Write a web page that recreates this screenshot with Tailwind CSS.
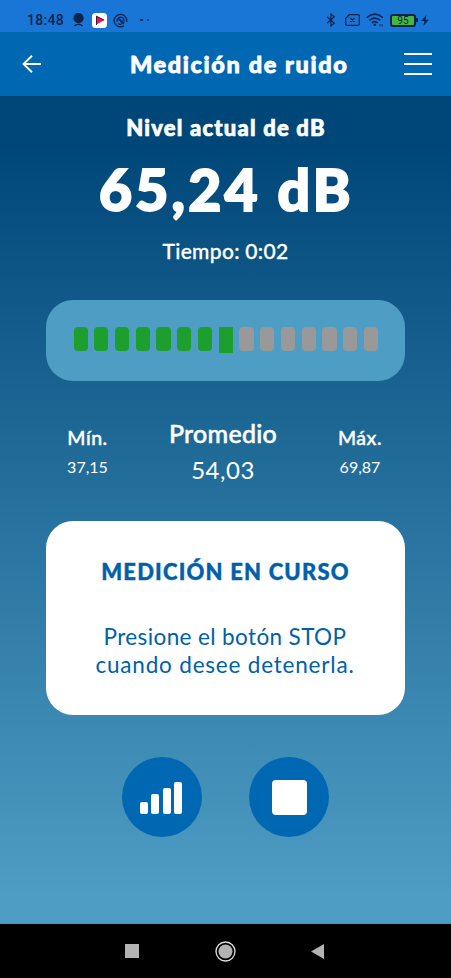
<!DOCTYPE html>
<html lang="es">
<head>
<meta charset="utf-8">
<meta name="viewport" content="width=device-width, initial-scale=1">
<title>Medición de ruido</title>
<script src="https://cdn.jsdelivr.net/npm/@tailwindcss/browser@4"></script>
</head>
<body class="bg-black">
<div class="w-[451px] h-[978px] flex flex-col overflow-hidden font-['Lato',sans-serif] text-white whitespace-nowrap">

  <!-- Status bar -->
  <div class="h-8 shrink-0 bg-[#1976d7] flex items-center justify-between pl-[27px] pr-[22px] pt-2 text-[#0a2450]">
    <div class="flex items-center">
      <span class="w-[38px] font-['Roboto',sans-serif] text-[14px] leading-4 font-medium tracking-[0.3px]">18:48</span>
      <svg class="ml-2 w-[11px] h-[14px]" viewBox="0 0 11 14"><circle cx="5.5" cy="5.2" r="5.1" fill="currentColor"/><path d="M1.500 12.800Q5.500 9.800 9.500 12.800" fill="none" stroke="currentColor" stroke-width="1.500"/></svg>
      <svg class="ml-2 w-[15px] h-[15px]" viewBox="0 0 15 15"><rect width="15" height="15" rx="3.500" fill="#fff"/><path d="M4 3 12.500 7 4.500 11.500z" fill="#e8194f"/><path d="M4.500 3V12M4 3 12 7" stroke="#4a1636" stroke-width="1" fill="none"/></svg>
      <svg class="ml-[6px] w-[15px] h-[15px]" viewBox="0 0 15 15" fill="none" stroke="currentColor"><path d="M11 12.800A6.300 6.300 0 1 1 13.600 9" stroke-width="1.300"/><path d="M4.300 8.800A3.400 3.400 0 0 1 10.900 6.500V8.500M4.800 10.500Q7 12 9 10.800" stroke-width="1.300"/><path d="M5.800 6 11 10.600" stroke-width="2.200"/></svg>
      <span class="ml-[12px] w-[2.500px] h-[2.500px] rounded-full bg-[#0a2450]"></span>
      <span class="ml-[4px] w-[2.500px] h-[2.500px] rounded-full bg-[#0a2450]"></span>
    </div>
    <div class="flex items-center">
      <svg class="w-[10px] h-[14px]" viewBox="0 0 10 14" fill="none" stroke="currentColor" stroke-width="1.200"><path d="M1 3.800 8.300 10.200 4.900 13V1L8.300 3.800 1 10.200"/></svg>
      <svg class="ml-[9px] w-[15px] h-[12px]" viewBox="0 0 15 12" fill="none" stroke="currentColor" stroke-width="1.200"><path d="M4.300.7H13.200Q14.300.7 14.300 1.800V10.200Q14.300 11.300 13.200 11.300H1.800Q.7 11.300.7 10.200V4.200zM5.300 4 9.500 8.200M9.500 4 5.300 8.200"/></svg>
      <svg class="ml-[6px] w-[18px] h-[14px]" viewBox="0 0 18 14" fill="none" stroke="currentColor" stroke-width="1.600"><path d="M.8 4.700Q8.800-2.300 16.800 4.700M3.300 7.500Q8.800 2.700 14.300 7.500M5.800 10Q8.800 7.400 11.800 10"/><circle cx="8.800" cy="11.800" r="1.300" fill="currentColor" stroke="none"/><path d="M14 11V13.500M16 11V13.500" stroke-width=".8"/></svg>
      <div class="ml-[6px] w-[26px] h-[13px] rounded-[3px] border-2 border-[#0a2450] bg-[#46b83c] font-['Roboto',sans-serif] text-[10px] leading-[9.500px] tracking-[0.2px] text-center">95</div>
      <span class="w-[2px] h-[4px] bg-[#0a2450]"></span>
      <svg class="ml-[3px] w-[8px] h-[11px]" viewBox="0 0 8 11" fill="currentColor"><path d="M5.500 0 .2 6H3.500L2.300 11 7.900 4.800H4.500z"/></svg>
    </div>
  </div>

  <!-- App bar -->
  <header class="h-16 shrink-0 bg-[#0068b3] flex items-center pl-[22px] pr-[19px]">
    <svg class="w-[19px] h-[18px]" viewBox="0 0 19 18" fill="none" stroke="#fff" stroke-width="1.900"><path d="M10 .7 1.500 9 10 17.300M1.500 9H19"/></svg>
    <h1 class="ml-[89px] text-[23.500px] leading-8 font-black tracking-[1.620px] [-webkit-text-stroke:0.8px_white]">Medición de ruido</h1>
    <div class="ml-auto w-[28px] h-[22px] flex flex-col justify-between">
      <span class="h-[2px] bg-white"></span><span class="h-[2px] bg-white"></span><span class="h-[2px] bg-white"></span>
    </div>
  </header>

  <!-- Measurement -->
  <main class="h-[827px] shrink-0 flex flex-col items-center bg-linear-to-b/srgb from-[#004779] from-6% to-[#4e9dc4] to-97% pt-[18px]">
    <h2 class="h-7 pl-px text-[22px] leading-7 font-black tracking-[1.200px] [-webkit-text-stroke:0.7px_white]">Nivel actual de dB</h2>
    <p class="mt-[17px] h-[60px] pl-[2px] text-[57px] leading-[60px] font-black tracking-[3.200px] [-webkit-text-stroke:2px_white]">65,24 dB</p>
    <p class="mt-[18px] h-7 text-[21px] leading-7 font-medium tracking-[0.300px] [-webkit-text-stroke:0.3px_white]">Tiempo: 0:02</p>

    <div class="mt-[35px] w-[359px] h-[81px] rounded-[27px] bg-[#4e9dc4] pl-[27.500px] pt-[27px] flex gap-[6.550px] items-start">
      <span class="w-[14.200px] h-[24px] rounded-[4px] bg-[#1d9f2e]"></span>
      <span class="w-[14.200px] h-[24px] rounded-[4px] bg-[#1d9f2e]"></span>
      <span class="w-[14.200px] h-[24px] rounded-[4px] bg-[#1d9f2e]"></span>
      <span class="w-[14.200px] h-[24px] rounded-[4px] bg-[#1d9f2e]"></span>
      <span class="w-[14.200px] h-[24px] rounded-[4px] bg-[#1d9f2e]"></span>
      <span class="w-[14.200px] h-[24px] rounded-[4px] bg-[#1d9f2e]"></span>
      <span class="w-[14.200px] h-[24px] rounded-[4px] bg-[#1d9f2e]"></span>
      <span class="w-[14.200px] h-[26px] bg-[#1d9f2e]"></span>
      <span class="w-[14.200px] h-[24px] rounded-[4px] bg-[#999]"></span>
      <span class="w-[14.200px] h-[24px] rounded-[4px] bg-[#999]"></span>
      <span class="w-[14.200px] h-[24px] rounded-[4px] bg-[#999]"></span>
      <span class="w-[14.200px] h-[24px] rounded-[4px] bg-[#999]"></span>
      <span class="w-[14.200px] h-[24px] rounded-[4px] bg-[#999]"></span>
      <span class="w-[14.200px] h-[24px] rounded-[4px] bg-[#999]"></span>
      <span class="w-[14.200px] h-[24px] rounded-[4px] bg-[#999]"></span>
    </div>

    <div class="mt-[36px] h-[68px] w-[359px] grid grid-cols-[83px_188px_86px] text-center">
      <div class="pt-[9px]">
        <div class="text-[19.500px] leading-6 font-medium tracking-[0.500px] [-webkit-text-stroke:0.4px_white]">Mín.</div>
        <div class="mt-[5px] text-[16px] leading-6">37,15</div>
      </div>
      <div class="pt-px">
        <div class="text-[25px] leading-[30px] font-medium tracking-[0.250px] [-webkit-text-stroke:0.5px_white]">Promedio</div>
        <div class="mt-[7px] text-[24px] leading-[30px] tracking-[0.500px]">54,03</div>
      </div>
      <div class="pt-[9px]">
        <div class="text-[19.500px] leading-6 font-medium tracking-[0.500px] [-webkit-text-stroke:0.4px_white]">Máx.</div>
        <div class="mt-[5px] text-[16px] leading-6">69,87</div>
      </div>
    </div>

    <section class="mt-[36px] w-[359px] h-[194px] shrink-0 rounded-[27px] bg-white pt-[36px] text-center text-[#0060aa]">
      <h3 class="text-[22px] leading-[30px] font-black tracking-[1.200px] [-webkit-text-stroke:0.4px_#0060aa]">MEDICIÓN EN CURSO</h3>
      <p class="mt-[36px] text-[22.500px] leading-[28px] pr-px"><span class="tracking-[0.380px]">Presione el botón STOP</span><br><span class="tracking-[0.800px]">cuando desee detenerla.</span></p>
    </section>

    <div class="mt-[42px] flex gap-[47px]">
      <button class="w-[80px] h-[80px] rounded-full bg-[#0068b3] flex items-end justify-center gap-[3.300px] pb-[23px] pr-[2px]" aria-label="Niveles">
        <span class="w-[8px] h-[12.500px] rounded-[2px] bg-white"></span>
        <span class="w-[8px] h-[20.500px] rounded-[2px] bg-white"></span>
        <span class="w-[8px] h-[26.500px] rounded-[2px] bg-white"></span>
        <span class="w-[8px] h-[32.500px] rounded-[2px] bg-white"></span>
      </button>
      <button class="w-[80px] h-[80px] rounded-full bg-[#0068b3] flex items-center justify-center" aria-label="Stop">
        <span class="w-[35px] h-[35px] rounded-[4px] bg-white"></span>
      </button>
    </div>
  </main>

  <!-- System navigation -->
  <nav class="h-[55px] shrink-0 bg-black border-t border-[#5888a5] flex items-center justify-between pl-[125px] pr-[127px]">
    <span class="w-[14px] h-[14px] bg-[#b3b3b3]"></span>
    <svg class="w-[21px] h-[21px]" viewBox="0 0 21 21"><circle cx="10.500" cy="10.500" r="9.500" fill="none" stroke="#ddd" stroke-width="1.300"/><circle cx="10.500" cy="10.500" r="7" fill="#b3b3b3"/></svg>
    <svg class="w-[13px] h-[15px]" viewBox="0 0 13 15"><path d="M0 7.500 13 0V15z" fill="#b3b3b3"/></svg>
  </nav>
</div>
</body>
</html>
